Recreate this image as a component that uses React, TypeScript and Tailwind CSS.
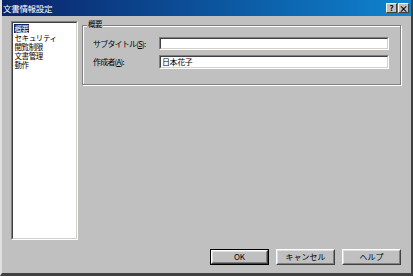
import React from "react";

const font = { fontFamily: '"Noto Sans CJK JP", "Liberation Sans", sans-serif' };

const Sunken: React.FC<{ className?: string; children?: React.ReactNode }> = ({ className = "", children }) => (
  <div className={`border border-t-[#808080] border-l-[#808080] border-b-white border-r-white ${className}`}>
    <div className="w-full h-full border border-t-[#404040] border-l-[#404040] border-b-[#d4d0c8] border-r-[#d4d0c8] bg-white">
      {children}
    </div>
  </div>
);

const Button: React.FC<{ label: string; isDefault?: boolean }> = ({ label, isDefault }) => (
  <div className={`w-[59px] h-[16px] ${isDefault ? "border border-black" : ""}`}>
    <div className="w-full h-full border border-t-white border-l-white border-b-[#404040] border-r-[#404040]">
      <div className="w-full h-full border border-t-[#dfdfdf] border-l-[#dfdfdf] border-b-[#808080] border-r-[#808080] flex items-center justify-center text-[8px] leading-none text-black">
        {label}
      </div>
    </div>
  </div>
);

export default function App() {
  const items = ["概要", "セキュリティ", "閲覧制限", "文書管理", "動作"];

  return (
    <div style={font} className="w-[413px] h-[276px] bg-[#c0c0c0] border-l-2 border-l-[#dfdfdf] border-r-2 border-r-[#404040] border-b-[3px] border-b-[#404040] flex flex-col overflow-hidden">
      {/* Title bar */}
      <div className="h-[16px] flex items-center justify-between bg-gradient-to-r from-[#0a246a] to-[#1084d0] pl-[1px] pr-[2px]">
        <span className="text-white text-[8.5px] leading-none tracking-[-0.3px]">文書情報設定</span>
        <div className="flex gap-[1px]">
          <div className="w-[11px] h-[10px] bg-[#c0c0c0] border border-t-white border-l-white border-b-[#404040] border-r-[#404040] flex items-center justify-center text-[8px] font-bold leading-none">?</div>
          <div className="w-[11px] h-[10px] bg-[#c0c0c0] border border-t-white border-l-white border-b-[#404040] border-r-[#404040] flex items-center justify-center text-[9px] font-bold leading-none">×</div>
        </div>
      </div>

      {/* Body */}
      <div className="flex flex-col pl-[9px] pt-[5px]">
        <div className="flex gap-[4px]">
          <Sunken className="w-[67px] h-[219px]">
            <div className="flex flex-col pt-[1px] pl-[1px] text-[7.5px] leading-[9px] text-black">
              {items.map((it, i) => (
                <span key={i} className={`self-start h-[9px] px-[0.5px] tracking-[-0.4px] ${i === 0 ? "bg-[#0a246a] text-white" : ""}`}>
                  {it}
                </span>
              ))}
            </div>
          </Sunken>

          {/* Group box */}
          <div className="relative mt-[4px] w-[319px] h-[60px] border border-[#808080] shadow-[inset_1px_1px_0_#fff,1px_1px_0_#fff]">
            <span className="absolute left-[4px] top-[-6px] bg-[#c0c0c0] px-[1px] text-[7.5px] leading-none tracking-[-0.6px]">概要</span>
            <div className="flex flex-col gap-[5px] pt-[11px] pl-[10px] text-[8px] leading-none">
              <div className="flex items-center">
                <span className="w-[66px] tracking-[-0.8px]">サブタイトル(<u>S</u>):</span>
                <Sunken className="w-[230px] h-[13px]" />
              </div>
              <div className="flex items-center">
                <span className="w-[66px] tracking-[-0.8px]">作成者(<u>A</u>):</span>
                <Sunken className="w-[230px] h-[14px]">
                  <span className="block pl-[1px] pt-[1px] text-[8px] leading-none tracking-[-0.4px]">日本花子</span>
                </Sunken>
              </div>
            </div>
          </div>
        </div>

        {/* Buttons */}
        <div className="flex justify-end gap-[7px] mt-[9px] pr-[10px]">
          <Button label="OK" isDefault />
          <Button label="キャンセル" />
          <Button label="ヘルプ" />
        </div>
      </div>
    </div>
  );
}
